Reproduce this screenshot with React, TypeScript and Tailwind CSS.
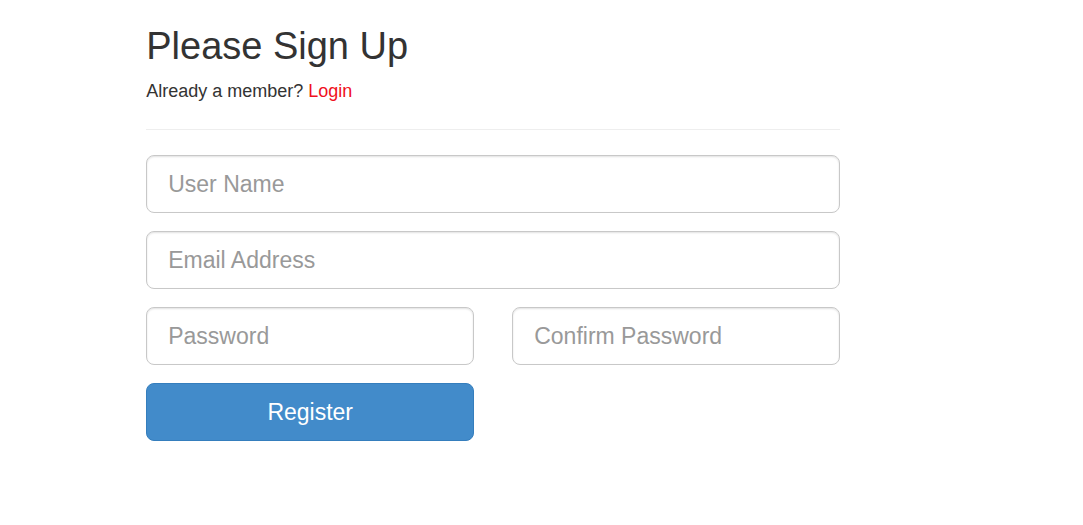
export default function App() {
  const field =
    "block h-[58px] w-full rounded-lg border border-[#c8c8c8] bg-white px-[21px] text-[23px] text-[#555555] shadow-[inset_0_1px_2px_rgba(0,0,0,0.12)] outline-none placeholder:text-[#999999] focus:border-[#66afe9]";
  return (
    <main className="min-h-screen bg-white px-[13.5%] pt-6 font-['Liberation_Sans',Arial,sans-serif] text-[#333333]">
      <form className="w-full max-w-[694px]" onSubmit={(e) => e.preventDefault()}>
        <h1 className="text-[38px] leading-[44px]">Please Sign Up</h1>
        <p className="mt-3 text-[18px] leading-[22px]">
          Already a member?{" "}
          <a href="#login" className="text-[#f01020]">
            Login
          </a>
        </p>
        <hr className="mt-[27px] mb-[25px] border-[#eeeeee]" />
        <div className="grid grid-cols-2 gap-x-[38px] gap-y-[18px]">
          <input className={`${field} col-span-2`} type="text" name="username" aria-label="User Name" placeholder="User Name" />
          <input className={`${field} col-span-2`} type="email" name="email" aria-label="Email Address" placeholder="Email Address" />
          <input className={field} type="password" name="password" aria-label="Password" placeholder="Password" />
          <input className={field} type="password" name="confirm" aria-label="Confirm Password" placeholder="Confirm Password" />
          <button type="submit" className="h-[58px] rounded-lg border border-[#357ebd] bg-[#428bca] text-[23px] text-white">
            Register
          </button>
        </div>
      </form>
    </main>
  );
}
